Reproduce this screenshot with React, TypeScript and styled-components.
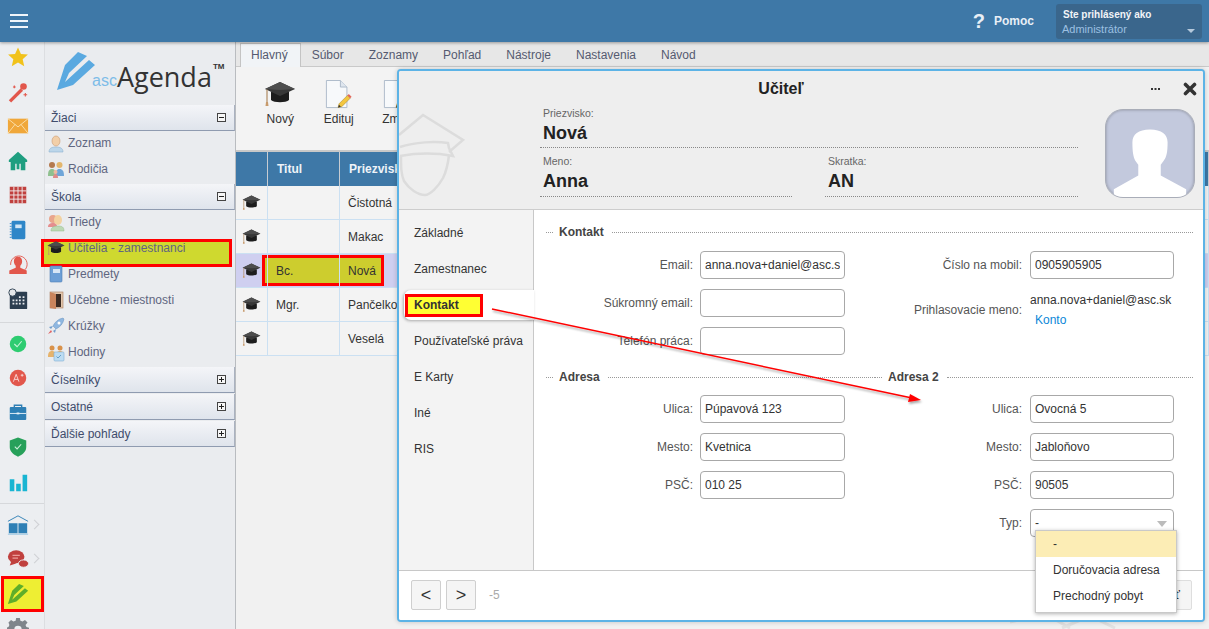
import React from 'react'
import styled, { createGlobalStyle } from 'styled-components'

const GlobalStyle = createGlobalStyle`
  html, body { margin: 0; padding: 0; background: #f1f1f1; overflow: hidden; }
  * { box-sizing: border-box; }
  body { font-family: "Liberation Sans", Arial, sans-serif; font-size: 12px; color: #333; }
`

const Page = styled.div`
  position: relative;
  width: 1209px;
  height: 629px;
  overflow: hidden;
  display: grid;
  grid-template-rows: 42px 1fr;
`
const TopBar = styled.header`
  position: relative;
  z-index: 2;
  display: flex;
  align-items: center;
  background: #3e78a7;
  box-shadow: 0 1px 3px rgba(0, 0, 0, 0.35);
  padding: 0 7px 0 10px;
`
const Burger = styled.div`
  width: 18px;
  height: 14px;
  border-top: 2px solid #f0f5fa;
  border-bottom: 2px solid #f0f5fa;
  position: relative;
  &::after {
    content: '';
    position: absolute;
    left: 0;
    right: 0;
    top: 4px;
    height: 2px;
    background: #f0f5fa;
  }
`
const Help = styled.div`
  margin-left: auto;
  display: flex;
  align-items: center;
  gap: 9px;
  color: #e8eff6;
  font-weight: bold;
  margin-right: 22px;
`
const HelpMark = styled.span`
  font-size: 20px;
`
const UserBox = styled.div`
  position: relative;
  width: 146px;
  height: 35px;
  background: #3a668c;
  border-radius: 3px;
  padding: 3px 6px;
  font-size: 11px;
  line-height: 15px;
`
const UserTitle = styled.div`
  color: #f1f4f8;
  font-size: 10px;
  font-weight: bold;
  padding-left: 1px;
`
const UserRole = styled.div`
  color: #9cc0e2;
`
const UserCaret = styled.i`
  position: absolute;
  right: 7px;
  top: 25px;
  border: 4px solid transparent;
  border-top: 4px solid #b5c9dc;
`

const Body = styled.div`
  display: grid;
  grid-template-columns: 45px 191px 1fr;
  min-height: 0;
`
const Rail = styled.nav`
  background: #eceef1;
  border-right: 1px solid #dcdee1;
  margin-top: -2px;
`
const RailDivider = styled.div<{ $top: number }>`
  height: 1px;
  background: #d6d8db;
  margin: ${({ $top }) => $top}px 0 3.5px;
`
const RailItem = styled.div<{ $marked?: boolean }>`
  position: relative;
  height: 34.5px;
  display: flex;
  align-items: center;
  padding-left: 7px;
  ${({ $marked }) =>
    $marked &&
    `
    z-index: 0;
    &::before {
      content: '';
      position: absolute;
      z-index: -1;
      left: 1px;
      right: 0;
      top: -1px;
      bottom: -1px;
      background: #eeee33;
      border: 3px solid #f00;
    }
  `}
`
const RailChevron = styled.span`
  position: absolute;
  left: 31px;
  top: 13px;
  width: 7px;
  height: 7px;
  border-top: 1px solid #cfd1d4;
  border-right: 1px solid #cfd1d4;
  transform: rotate(45deg);
`

const Sidebar = styled.aside`
  background: #eaecef;
  border-right: 1px solid #b9bcc0;
`
const LogoRow = styled.div`
  height: 63px;
  display: flex;
  align-items: flex-end;
  padding: 0 0 15px 12px;
  color: #333;
`
const LogoAsc = styled.span`
  color: #7dbce8;
  font-size: 16px;
  line-height: 18px;
  margin-left: -3px;
`
const LogoName = styled.span`
  font-family: "Open Sans", sans-serif;
  font-size: 27px;
  line-height: 30px;
  color: #333;
  margin-bottom: -2px;
`
const LogoTm = styled.span`
  align-self: flex-start;
  margin: 20px 0 0 1px;
  font-size: 8px;
  line-height: 9px;
  font-weight: bold;
`
const GroupHead = styled.div`
  height: 26px;
  margin-bottom: 1px;
  display: flex;
  align-items: center;
  justify-content: space-between;
  padding: 0 8px 0 6px;
  font-size: 12px;
  color: #404c6c;
  background: linear-gradient(#f4f5f8, #dfe4ec);
  border-bottom: 1px solid #8f9bb0;
  border-right: 1px solid #aab2c0;
`
const Toggle = styled.span`
  position: relative;
  width: 9px;
  height: 9px;
  border: 1px solid #444;
  background: #f6f6f6;
  &::before {
    content: '';
    position: absolute;
    left: 1px;
    right: 1px;
    top: 3px;
    height: 1px;
    background: #222;
  }
`
const TogglePlus = styled(Toggle)`
  &::after {
    content: '';
    position: absolute;
    top: 1px;
    bottom: 1px;
    left: 3px;
    width: 1px;
    background: #222;
  }
`
const SideItem = styled.div<{ $marked?: boolean }>`
  position: relative;
  z-index: 0;
  height: 26px;
  display: flex;
  align-items: center;
  gap: 3px;
  padding: 0 0 4px 2px;
  color: #5f6680;
  font-size: 12px;
  ${({ $marked }) =>
    $marked &&
    `
    &::before {
      content: '';
      position: absolute;
      z-index: -1;
      left: -4px;
      right: 3px;
      top: 2px;
      bottom: -4px;
      background: #cfd92f;
      border: 3px solid #f00;
    }
  `}
`

const Main = styled.main`
  min-width: 0;
  display: flex;
  flex-direction: column;
`
const Tabs = styled.div`
  height: 25px;
  flex: none;
  background: #e7e7e7;
  display: flex;
  align-items: flex-end;
  padding-left: 4px;
  border-bottom: 1px solid #c9c9c9;
`
const Tab = styled.div<{ $active?: boolean }>`
  height: 24px;
  line-height: 23px;
  padding: 0 12px 0 10px;
  margin-right: ${({ $active }) => ($active ? 0 : 1)}px;
  color: #555a70;
  border: 1px solid ${({ $active }) => ($active ? '#c4c4c4' : 'transparent')};
  border-bottom: 0;
  background: ${({ $active }) => ($active ? '#f1f4f7' : 'transparent')};
  margin-bottom: -1px;
`
const Ribbon = styled.div`
  height: 85px;
  flex: none;
  display: flex;
  padding: 10px 0 0 15px;
  background: #f3f3f3;
  border-bottom: 2px solid #c8c8c8;
`
const RibbonButton = styled.div`
  width: 58.5px;
  display: flex;
  flex-direction: column;
  align-items: center;
  color: #333;
`
const RibbonIcon = styled.div`
  height: 34px;
  display: flex;
  align-items: center;
  margin-bottom: 1px;
`
const TableRow = styled.div<{ $selected?: boolean }>`
  position: relative;
  z-index: 0;
  display: grid;
  grid-template-columns: 32px 72px 1fr;
  height: 34px;
  background: ${({ $selected }) => ($selected ? '#cfcff0' : '#f3f3f3')};
  border-bottom: 1px solid #cbe0f2;
`
const TableHead = styled(TableRow)`
  background: #3e78a7;
  border-bottom: 0;
  color: #eef3f8;
  font-weight: bold;
`
const Cell = styled.div`
  display: flex;
  align-items: center;
  padding-left: 8px;
  color: #333;
  border-right: 1px solid #cbe0f2;
`
const HeadCell = styled(Cell)`
  color: inherit;
  padding-left: 9px;
  border-right: 1px solid #c7ccd2;
`
const IconCell = styled(Cell)`
  padding-left: 6px;
`
const RowMark = styled.div`
  position: absolute;
  z-index: -1;
  left: 26px;
  width: 122px;
  top: 1px;
  height: 31px;
  background: #cdcd2e;
  border: 3px solid #f00;
`

const Dialog = styled.section`
  position: absolute;
  left: 397px;
  top: 69px;
  width: 808px;
  height: 553px;
  z-index: 3;
  display: flex;
  flex-direction: column;
  background: #fff;
  border: 2px solid #5cb3e6;
  border-radius: 4px;
  box-shadow: 0 0 5px rgba(0, 0, 0, 0.2);
  overflow: hidden;
`
const DialogHead = styled.div`
  position: relative;
  flex: none;
  height: 139px;
  background: #eee;
  border-bottom: 1px solid #cdcdcd;
  overflow: hidden;
`
const Watermark = styled.svg`
  position: absolute;
  left: -2px;
  top: 39px;
`
const TitleRow = styled.div`
  display: grid;
  grid-template-columns: 1fr 53px;
  height: 36px;
  align-items: center;
`
const Title = styled.h1`
  margin: 0;
  padding-left: 13px;
  text-align: center;
  font-size: 16px;
  font-weight: bold;
  color: #222;
`
const TitleActions = styled.div`
  display: flex;
  align-items: center;
  justify-content: space-between;
  padding-right: 6px;
`
const HeadBody = styled.div`
  display: flex;
  gap: 27px;
  padding: 0 8px 0 141px;
`
const HeadFields = styled.div`
  width: 538px;
  height: 90px;
  display: grid;
  grid-template-columns: 252px 253px;
  grid-template-rows: 41px 42px;
  justify-content: space-between;
  row-gap: 7px;
`
const HeadField = styled.div<{ $wide?: boolean }>`
  grid-column: ${({ $wide }) => ($wide ? '1 / -1' : 'auto')};
  padding-left: 3px;
  border-bottom: 1px dotted #888;
`
const HeadLabel = styled.div`
  font-size: 10.5px;
  line-height: 12px;
  color: #666;
`
const HeadValue = styled.div`
  font-size: 18px;
  line-height: 28px;
  font-weight: bold;
  color: #222;
`
const Avatar = styled.div`
  width: 90px;
  height: 89px;
  margin-top: 2px;
  border-radius: 18px;
  border: 1px solid #a9adb8;
  background: #c3c9dd;
  overflow: hidden;
  box-shadow: inset 0 0 3px rgba(0, 0, 0, 0.3);
`
const DialogBody = styled.div`
  flex: 1;
  display: flex;
  min-height: 0;
`
const DialogNav = styled.div`
  width: 135px;
  flex: none;
  background: #f3f3f3;
  border-right: 1px solid #c8c8c8;
  padding: 5px 0 0 5px;
`
const NavItem = styled.div<{ $active?: boolean }>`
  position: relative;
  z-index: 1;
  height: 36px;
  display: flex;
  align-items: center;
  padding-left: 10px;
  color: #333;
  ${({ $active }) =>
    $active &&
    `
    height: 30px;
    margin: 3px -1px 3px 0;
    background: #fff;
    border-radius: 7px 0 0 7px;
    box-shadow: -1px 1px 3px rgba(0, 0, 0, 0.3);
    font-weight: bold;
  `}
`
const NavMark = styled.span`
  margin-left: -9px;
  width: 78px;
  height: 23px;
  padding-left: 6px;
  line-height: 17px;
  background: #ffff33;
  border: 3px solid #f00;
`
const Form = styled.div`
  flex: 1;
  background: #fff;
  padding: 13px 11px 0 12px;
`
const FormColumns = styled.div`
  display: grid;
  grid-template-columns: 329px 318px;
`
const AddressColumns = styled(FormColumns)`
  margin-top: 13px;
`
const Legend = styled.div<{ $wide?: boolean; $below?: number }>`
  grid-column: ${({ $wide }) => ($wide ? '1 / -1' : 'span 1')};
  display: flex;
  align-items: center;
  height: 18px;
  margin-bottom: ${({ $below }) => $below ?? 10}px;
  font-weight: bold;
  color: #444;
  &::before {
    content: '';
    width: 7px;
    margin-right: 6px;
    border-top: 1px dotted #999;
  }
  &::after {
    content: '';
    flex: 1;
    margin-left: 8px;
    border-top: 1px dotted #999;
  }
`
const Field = styled.div`
  position: relative;
  display: flex;
  align-items: center;
  gap: 7px;
  height: 28px;
`
const LoginField = styled(Field)`
  height: 42px;
`
const FieldLabel = styled.label`
  width: 147px;
  flex: none;
  text-align: right;
  color: #555;
`
const TextInput = styled.input`
  width: 145px;
  height: 28px;
  padding: 0 4px;
  font: 12px "Liberation Sans", Arial, sans-serif;
  color: #333;
  background: #fff;
  border: 1px solid #a8a8a8;
  border-radius: 4px;
  outline: none;
`
const FormBlock = styled.div`
  display: flex;
  flex-direction: column;
  gap: 10px;
`
const RightBlock = styled(FormBlock)`
  ${Field} {
    gap: 8px;
  }
  ${TextInput} {
    width: 144px;
  }
`
const LoginInfo = styled.div`
  line-height: 20px;
`
const LoginLink = styled.a`
  display: block;
  margin-left: 5px;
  color: #0b87d8;
`
const SelectBox = styled.div`
  position: relative;
  width: 144px;
  height: 28px;
  line-height: 26px;
  padding-left: 4px;
  border: 1px solid #a8a8a8;
  border-radius: 4px;
  &::after {
    content: '';
    position: absolute;
    right: 6px;
    top: 11px;
    border: 5px solid transparent;
    border-top: 6px solid #bbb;
  }
`
const Menu = styled.div`
  position: absolute;
  z-index: 4;
  left: 4px;
  top: 20px;
  width: 142px;
  padding-bottom: 3px;
  background: #fff;
  border: 1px solid #c9c9c9;
  box-shadow: 0 1px 4px rgba(0, 0, 0, 0.3);
`
const MenuItem = styled.div<{ $active?: boolean }>`
  height: 26px;
  line-height: 26px;
  padding-left: 17px;
  color: #333;
  background: ${({ $active }) => ($active ? '#fcedb5' : '#fff')};
`
const Footer = styled.div`
  flex: none;
  height: 50px;
  display: flex;
  align-items: center;
  gap: 5px;
  padding: 0 11px 1px 12px;
  background: #fff;
  border-top: 1px solid #c8c8c8;
`
const PageButton = styled.div`
  width: 30px;
  height: 30px;
  display: flex;
  align-items: center;
  justify-content: center;
  font-size: 18px;
  color: #333;
  background: #f5f5f5;
  border: 1px solid #cfcfcf;
  border-radius: 2px;
`
const PageCount = styled.span`
  margin-left: 8px;
  color: #aaa;
`
const SaveButton = styled.div`
  margin-left: auto;
  width: 90px;
  height: 30px;
  line-height: 28px;
  text-align: right;
  padding-right: 11px;
  font-size: 13px;
  color: #333;
  background: #f5f5f5;
  border: 1px solid #dedede;
  border-radius: 2px;
`
const ArrowLayer = styled.svg`
  position: absolute;
  left: 0;
  top: 0;
  z-index: 5;
  pointer-events: none;
`
const BackLayer = styled.svg`
  position: absolute;
  left: 990px;
  top: 612px;
  z-index: 1;
`

const PEN_PATH = 'M0 38 8 13 21 0 30 4 12 21 8 30 32 8 38 13 16 33z'

const Cap = ({ width = 32 }: { width?: number }) => (
  <svg width={width} height={(width * 26) / 32} viewBox="0 0 32 26">
    <path d="M7 11v8c3 3 15 3 18 0v-8z" fill="#1d1d1d" />
    <path d="M16 1 31 8 16 15 1 8z" fill="#383838" />
    <path d="M16 1 31 8 16 9 1 8z" fill="#4d4d4d" />
    <path d="M3 8.5V21" stroke="#b08a62" strokeWidth="1.2" />
    <path d="M2 21h2l.5 4h-3z" fill="#c79a6b" />
  </svg>
)

const railIcons: Record<string, React.ReactNode> = {
  star: <path d="M12 1.5 15.2 8.6 22.8 9.4 17.1 14.5 18.8 22 12 18.100 5.200 22 6.900 14.500 1.200 9.400 8.800 8.600z" fill="#f1c21b" />,
  wand: (
    <>
      <path d="M2 21 15 8l2.500 2.500-13 13z" fill="#e2574c" />
      <circle cx="18" cy="6" r="3.600" fill="#e2574c" />
      <path d="M20 13v4M18 15h4M8 5v3M6.500 6.500h3" stroke="#e2574c" strokeWidth="1.200" />
    </>
  ),
  mail: (
    <>
      <rect x="1" y="4" width="22" height="16" fill="#f0a73a" />
      <path d="M1 4 12 13 23 4M1 20 9 10M23 20 15 10" fill="none" stroke="#fbe0ae" strokeWidth="1" />
    </>
  ),
  home: <path d="M12 2 22 11v2h-2v9h-5v-7H9v7H4v-9H2v-2zM10.500 15v6h3v-6z" fill="#1f9e80" fillRule="evenodd" />,
  grid: (
    <>
      <rect x="3" y="3" width="18" height="18" fill="#c0403e" />
      <path d="M7.500 3v18M12 3v18M16.500 3v18M3 7.500h18M3 12h18M3 16.500h18" stroke="#f1f1f1" strokeWidth="1" />
    </>
  ),
  note: (
    <>
      <rect x="5" y="2" width="15" height="20" rx="1.500" fill="#2e86c8" />
      <rect x="9" y="6" width="7" height="4" fill="#cfe5f5" />
      <path d="M5 5H3M5 8H3M5 11H3M5 14H3M5 17H3M5 20H3" stroke="#2e86c8" strokeWidth="1" />
    </>
  ),
  person: (
    <>
      <path d="M4 13a9 9 0 1 1 3 6" fill="none" stroke="#e2574c" strokeWidth="1" />
      <path d="M12 4c3 0 4.500 2 4.500 5 0 2.500-1 4-2 5v2l7 3v4H2.500v-4l7-3v-2c-1-1-2-2.500-2-5 0-3 1.500-5 4.500-5z" fill="#e2574c" />
    </>
  ),
  cal: (
    <>
      <rect x="3" y="4" width="19" height="19" rx="1" fill="#2c3e50" />
      <circle cx="6" cy="5" r="4" fill="#e5e7ea" stroke="#2c3e50" />
      <path d="M13 9h2v2h-2zM17 9h2v2h-2zM6 12.500h2v2H6zM9.500 12.500h2v2h-2zM13 12.500h2v2h-2zM17 12.500h2v2h-2zM6 16h2v2H6zM9.500 16h2v2h-2zM13 16h2v2h-2zM17 16h2v2h-2z" fill="#e8eaee" />
    </>
  ),
  check: (
    <>
      <circle cx="12" cy="12" r="9" fill="#2ecc71" />
      <path d="M8 12l3 3 5-6" fill="none" stroke="#c9f4da" strokeWidth="1.200" />
    </>
  ),
  grade: (
    <>
      <circle cx="12" cy="12" r="9" fill="#e2574c" />
      <path d="M7 16 10 8l3 8M8 13.500h4M15 9h3M16.500 7.500v3" fill="none" stroke="#f9d9d6" strokeWidth="1" />
    </>
  ),
  case: (
    <>
      <path d="M8 6V3.500h8V6" fill="none" stroke="#2e7fb5" strokeWidth="1.500" />
      <rect x="3" y="5.500" width="18" height="14" rx="1" fill="#2e7fb5" />
      <path d="M3 12.500h18" stroke="#e8f2f8" strokeWidth="1" />
      <rect x="10.500" y="11.500" width="3" height="2" fill="#e8f2f8" />
    </>
  ),
  shield: (
    <>
      <path d="M12 1.500 21 5v7c0 5-4 8.500-9 10.500C7 20.500 3 17 3 12V5z" fill="#27a05a" />
      <path d="M8.500 11.500l2.500 2.500 4.500-5" fill="none" stroke="#cdeedb" strokeWidth="1.200" />
    </>
  ),
  bars: <path d="M3 9h5v13H3zM10 14h5v8h-5zM17 4h5v18h-5z" fill="#19b5d2" />,
  book: (
    <>
      <path d="M2 10h9.500v11H2zM12.500 10H22v11h-9.500z" fill="#2e7fb5" />
      <path d="M1 8 12 2l11 6" fill="none" stroke="#2e7fb5" strokeWidth="1" />
      <path d="M1 22h22" stroke="#8cc0e0" strokeWidth="1" />
    </>
  ),
  chat: (
    <>
      <ellipse cx="10" cy="9.500" rx="9" ry="7" fill="#c0403e" />
      <path d="M3 19l2-5 5 3z" fill="#c0403e" />
      <ellipse cx="18" cy="17" rx="5.500" ry="4" fill="#c0403e" stroke="#eceef1" />
      <path d="M6 8h8M6 11h6" stroke="#eb9c98" strokeWidth="1.200" />
    </>
  ),
  pen: <path transform="translate(1 1) scale(.58)" d={PEN_PATH} fill="#5fae2a" />,
  gear: (
    <path
      d="M10 1h4l.6 3 2.400 1 2.600-1.700 2.800 2.800L20.200 8.700l1 2.300 2.800.6v4l-2.800.6-1 2.400 1.600 2.500-2.800 2.800-2.600-1.700-2.400 1-.6 3h-4l-.6-3-2.400-1-2.600 1.700-2.800-2.800 1.600-2.500-1-2.400-2.800-.6v-4l2.800-.6 1-2.300L1.600 6.100l2.800-2.800L7 5l2.400-1zM12 9.500a4 4 0 1 0 0 8 4 4 0 0 0 0-8z"
      fill="#7f858b"
      fillRule="evenodd"
    />
  ),
}

const RailIcon = ({ name }: { name: string }) => (
  <svg width="22" height="22" viewBox="0 0 24 24">
    {railIcons[name]}
  </svg>
)

const sideIcons: Record<string, React.ReactNode> = {
  person: (
    <>
      <path d="M2 18c0-4 3-5 7-5s7 1 7 5z" fill="#bcd6ea" stroke="#8fb4d0" strokeWidth=".6" />
      <ellipse cx="9" cy="7" rx="4" ry="5" fill="#f2cfa8" stroke="#c99a72" strokeWidth=".6" />
    </>
  ),
  parents: (
    <>
      <circle cx="5" cy="5" r="3" fill="#b47a4f" />
      <path d="M1 16c0-5 1-7 4-7s4 2 4 7z" fill="#8fc08f" />
      <circle cx="12.500" cy="5" r="3" fill="#e3b66d" />
      <path d="M8.500 16c0-5 1-7 4-7s4.500 2 4.500 7z" fill="#6fa5d8" />
      <circle cx="8.500" cy="12" r="2" fill="#f0b9a0" />
      <path d="M6 18c0-3 1-4 2.500-4s2.500 1 2.500 4z" fill="#e08a8a" />
    </>
  ),
  classes: (
    <>
      <circle cx="6" cy="6" r="4" fill="#e9a58c" />
      <path d="M1 14c0-3 2-4 5-4s4 1 4 4z" fill="#e58e8e" />
      <ellipse cx="11" cy="7" rx="4" ry="5" fill="#f3d2a0" />
      <path d="M4 18c0-4 3-5 7-5s6 1 6 5z" fill="#bcd9b4" stroke="#94b98c" strokeWidth=".5" />
    </>
  ),
  book: (
    <>
      <rect x="3" y="1" width="12" height="16" rx="1" fill="#6d9fd6" stroke="#4f7fb5" strokeWidth=".6" />
      <rect x="6" y="4" width="7" height="4" fill="#d8e6f5" />
    </>
  ),
  door: (
    <>
      <rect x="3" y="1" width="13" height="16" fill="#e2c7ae" stroke="#a97c5c" strokeWidth=".6" />
      <rect x="7" y="3" width="7" height="13" fill="#3a2a22" />
      <path d="M3 1 9 3v15l-6-1z" fill="#c9845c" />
    </>
  ),
  rocket: (
    <>
      <path d="M16 1c-5 1-8 4-10 8l3 3c4-2 7-5 8-10z" fill="#8fb7e0" stroke="#6b93bd" strokeWidth=".5" />
      <circle cx="12" cy="6" r="1.500" fill="#fff" />
      <path d="M6 9 2 10l2 2zM9 12l-1 4-2-2z" fill="#6f9ccc" />
      <path d="M4 13l-3 4 4-2z" fill="#e06060" />
    </>
  ),
  hours: (
    <>
      <circle cx="5" cy="5" r="2.500" fill="#d9924a" />
      <circle cx="13" cy="5" r="2.500" fill="#d9924a" />
      <path d="M1 14c0-4 1-6 4-6s4 2 4 6zM9 14c0-4 1-6 4-6s4 2 4 6z" fill="#e6b36c" />
      <rect x="7" y="9" width="10" height="9" rx="1" fill="#bcdcf2" stroke="#7fb0d4" strokeWidth=".6" />
      <path d="M9.500 13.500l1.500 1.500 3-3" fill="none" stroke="#4f8fbf" strokeWidth=".8" />
    </>
  ),
}

const SideIcon = ({ name }: { name: string }) => (
  <svg width="18" height="19" viewBox="0 0 18 19">
    {sideIcons[name]}
  </svg>
)

const DocIcon = () => (
  <svg width="28" height="31" viewBox="0 0 30 32">
    <path d="M1.500 1h15l7 7v22h-22z" fill="#f7f9fb" stroke="#aab8c8" />
    <path d="M16.500 1v7h7" fill="#dfe6ee" stroke="#aab8c8" />
    <path d="M14 30l1-4 9-9 3 3-9 9z" fill="#f3c63f" stroke="#a98a35" strokeWidth=".6" />
    <path d="M24 17l3 3 1.500-1.500-3-3z" fill="#e2685c" />
    <path d="M14 30l1-3 2 2z" fill="#333" />
  </svg>
)

const topRail = ['star', 'wand', 'mail', 'home', 'grid', 'note', 'person', 'cal']
const midRail = ['check', 'grade', 'case', 'shield', 'bars']

const teachers = [
  { title: '', name: 'Čistotná' },
  { title: '', name: 'Makac' },
  { title: 'Bc.', name: 'Nová', selected: true },
  { title: 'Mgr.', name: 'Pančelko' },
  { title: '', name: 'Veselá' },
]

const navItems = ['Základné', 'Zamestnanec', 'Kontakt', 'Používateľské práva', 'E Karty', 'Iné', 'RIS']

const TextField = ({ label, value }: { label: string; value?: string }) => (
  <Field>
    <FieldLabel>{label}</FieldLabel>
    <TextInput readOnly defaultValue={value ?? ''} />
  </Field>
)

export default function App() {
  return (
    <Page>
      <GlobalStyle />
      <TopBar>
        <Burger />
        <Help>
          <HelpMark>?</HelpMark>
          <span>Pomoc</span>
        </Help>
        <UserBox>
          <UserTitle>Ste prihlásený ako</UserTitle>
          <UserRole>Administrátor</UserRole>
          <UserCaret />
        </UserBox>
      </TopBar>

      <Body>
        <Rail>
          {topRail.map((n) => (
            <RailItem key={n}>
              <RailIcon name={n} />
            </RailItem>
          ))}
          <RailDivider $top={6} />
          {midRail.map((n) => (
            <RailItem key={n}>
              <RailIcon name={n} />
            </RailItem>
          ))}
          <RailDivider $top={4} />
          <RailItem>
            <RailIcon name="book" />
            <RailChevron />
          </RailItem>
          <RailItem>
            <RailIcon name="chat" />
            <RailChevron />
          </RailItem>
          <RailItem $marked>
            <RailIcon name="pen" />
          </RailItem>
          <RailItem>
            <RailIcon name="gear" />
          </RailItem>
        </Rail>

        <Sidebar>
          <LogoRow>
            <svg width="38" height="38" viewBox="0 0 38 38">
              <path d={PEN_PATH} fill="#5aa9e0" />
            </svg>
            <LogoAsc>asc</LogoAsc>
            <LogoName>Agenda</LogoName>
            <LogoTm>TM</LogoTm>
          </LogoRow>
          <GroupHead>
            Žiaci
            <Toggle />
          </GroupHead>
          <SideItem>
            <SideIcon name="person" />
            Zoznam
          </SideItem>
          <SideItem>
            <SideIcon name="parents" />
            Rodičia
          </SideItem>
          <GroupHead>
            Škola
            <Toggle />
          </GroupHead>
          <SideItem>
            <SideIcon name="classes" />
            Triedy
          </SideItem>
          <SideItem $marked>
            <Cap width={18} />
            Učitelia - zamestnanci
          </SideItem>
          <SideItem>
            <SideIcon name="book" />
            Predmety
          </SideItem>
          <SideItem>
            <SideIcon name="door" />
            Učebne - miestnosti
          </SideItem>
          <SideItem>
            <SideIcon name="rocket" />
            Krúžky
          </SideItem>
          <SideItem>
            <SideIcon name="hours" />
            Hodiny
          </SideItem>
          <GroupHead>
            Číselníky
            <TogglePlus />
          </GroupHead>
          <GroupHead>
            Ostatné
            <TogglePlus />
          </GroupHead>
          <GroupHead>
            Ďalšie pohľady
            <TogglePlus />
          </GroupHead>
        </Sidebar>

        <Main>
          <Tabs>
            <Tab $active>Hlavný</Tab>
            <Tab>Súbor</Tab>
            <Tab>Zoznamy</Tab>
            <Tab>Pohľad</Tab>
            <Tab>Nástroje</Tab>
            <Tab>Nastavenia</Tab>
            <Tab>Návod</Tab>
          </Tabs>
          <Ribbon>
            <RibbonButton>
              <RibbonIcon>
                <Cap />
              </RibbonIcon>
              Nový
            </RibbonButton>
            <RibbonButton>
              <RibbonIcon>
                <DocIcon />
              </RibbonIcon>
              Edituj
            </RibbonButton>
            <RibbonButton>
              <RibbonIcon>
                <DocIcon />
              </RibbonIcon>
              Zmaž
            </RibbonButton>
          </Ribbon>
          <TableHead>
            <HeadCell />
            <HeadCell>Titul</HeadCell>
            <HeadCell>Priezvisko</HeadCell>
          </TableHead>
          {teachers.map((t) => (
            <TableRow key={t.name} $selected={t.selected}>
              {t.selected && <RowMark />}
              <IconCell>
                <Cap width={19} />
              </IconCell>
              <Cell>{t.title}</Cell>
              <Cell>{t.name}</Cell>
            </TableRow>
          ))}
        </Main>
      </Body>

      <BackLayer width="130" height="17" viewBox="0 0 130 17">
        <path d="M20 10 55 2l25 14M72 16 100 4l25 12" fill="none" stroke="#e2e2e2" strokeWidth="3" />
      </BackLayer>

      <Dialog>
        <DialogHead>
          <Watermark width="70" height="100" viewBox="397 110 70 100">
            <g fill="none" stroke="#dcdcdc" strokeWidth="2.500">
              <path d="M399 135 423 115 463 140 449 152" />
              <path d="M400 147c15-5 35-6 48-4l1 5 4 8c-16-3-36-3-53 0" />
              <path d="M401 156c0 11 0 18 3 25 5 8 14 14 21 14 5 0 13-8 18-17 3-6 5-14 6-23" />
            </g>
          </Watermark>
          <TitleRow>
            <Title>Učiteľ</Title>
            <TitleActions>
              <svg width="11" height="4" viewBox="0 0 11 4">
                <path d="M1 1h2v2H1zM4.500 1h2v2h-2zM8 1h2v2H8z" fill="#333" />
              </svg>
              <svg width="14" height="14" viewBox="0 0 14 14">
                <path d="M2.500 2.500l9 9M11.500 2.500l-9 9" stroke="#333" strokeWidth="3.600" strokeLinecap="round" />
              </svg>
            </TitleActions>
          </TitleRow>
          <HeadBody>
            <HeadFields>
              <HeadField $wide>
                <HeadLabel>Priezvisko:</HeadLabel>
                <HeadValue>Nová</HeadValue>
              </HeadField>
              <HeadField>
                <HeadLabel>Meno:</HeadLabel>
                <HeadValue>Anna</HeadValue>
              </HeadField>
              <HeadField>
                <HeadLabel>Skratka:</HeadLabel>
                <HeadValue>AN</HeadValue>
              </HeadField>
            </HeadFields>
            <Avatar>
              <svg width="88" height="87" viewBox="0 0 90 89">
                <path
                  d="M27 33c0-8 6-13 18-13s18 5 18 13c0 10-1 15-4 19l-3 4v11l26 14v8H8v-8l25-14V56l-3-4c-2-4-3-9-3-19z"
                  fill="#fff"
                />
              </svg>
            </Avatar>
          </HeadBody>
        </DialogHead>

        <DialogBody>
          <DialogNav>
            {navItems.map((item) =>
              item === 'Kontakt' ? (
                <NavItem key={item} $active>
                  <NavMark>{item}</NavMark>
                </NavItem>
              ) : (
                <NavItem key={item}>{item}</NavItem>
              ),
            )}
          </DialogNav>
          <Form>
            <Legend $wide>Kontakt</Legend>
            <FormColumns>
              <FormBlock>
                <TextField label="Email:" value="anna.nova+daniel@asc.sk" />
                <TextField label="Súkromný email:" />
                <TextField label="Telefón práca:" />
              </FormBlock>
              <RightBlock>
                <TextField label="Číslo na mobil:" value="0905905905" />
                <LoginField>
                  <FieldLabel>Prihlasovacie meno:</FieldLabel>
                  <LoginInfo>
                    anna.nova+daniel@asc.sk
                    <LoginLink>Konto</LoginLink>
                  </LoginInfo>
                </LoginField>
              </RightBlock>
            </FormColumns>
            <AddressColumns>
              <Legend $below={9}>Adresa</Legend>
              <Legend $below={9}>Adresa 2</Legend>
              <FormBlock>
                <TextField label="Ulica:" value="Púpavová 123" />
                <TextField label="Mesto:" value="Kvetnica" />
                <TextField label="PSČ:" value="010 25" />
              </FormBlock>
              <RightBlock>
                <TextField label="Ulica:" value="Ovocná 5" />
                <TextField label="Mesto:" value="Jabloňovo" />
                <TextField label="PSČ:" value="90505" />
                <Field>
                  <FieldLabel>Typ:</FieldLabel>
                  <SelectBox>
                    -
                    <Menu>
                      <MenuItem $active>-</MenuItem>
                      <MenuItem>Doručovacia adresa</MenuItem>
                      <MenuItem>Prechodný pobyt</MenuItem>
                    </Menu>
                  </SelectBox>
                </Field>
              </RightBlock>
            </AddressColumns>
          </Form>
        </DialogBody>

        <Footer>
          <PageButton>&lt;</PageButton>
          <PageButton>&gt;</PageButton>
          <PageCount>-5</PageCount>
          <SaveButton>Uložiť</SaveButton>
        </Footer>
      </Dialog>

      <ArrowLayer width="1209" height="629" viewBox="0 0 1209 629">
        <defs>
          <filter id="arrowShadow" x="-5%" y="-20%" width="110%" height="150%">
            <feDropShadow dx="1" dy="2" stdDeviation="1" floodColor="#000" floodOpacity="0.35" />
          </filter>
        </defs>
        <g filter="url(#arrowShadow)">
          <path d="M492 309 912 398" stroke="#f00" strokeWidth="1.500" />
          <path d="M921 400 908 402 910 394z" fill="#f00" />
        </g>
      </ArrowLayer>
    </Page>
  )
}
